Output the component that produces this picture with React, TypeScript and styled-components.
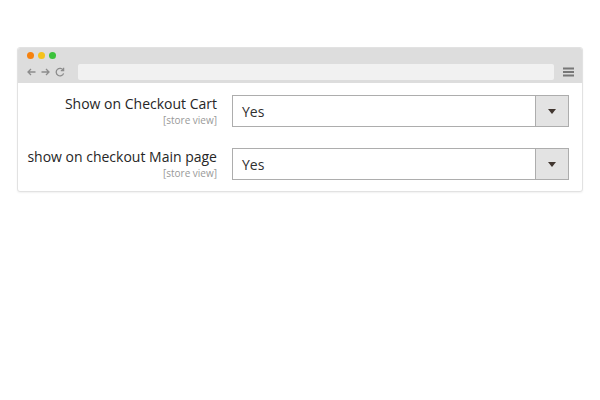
import React from 'react';
import styled, { createGlobalStyle } from 'styled-components';

const GlobalStyle = createGlobalStyle`
  html, body {
    margin: 0;
    padding: 0;
    background: #fff;
  }
  body {
    font-family: 'Open Sans', 'Noto Sans', sans-serif;
    color: #303030;
  }
`;

const Page = styled.div`
  width: 600px;
  height: 400px;
  box-sizing: border-box;
  padding: 47px 17px 0 17px;
`;

const Window = styled.div`
  width: 566px;
  border: 1px solid #e2e2e2;
  border-radius: 3px;
  box-shadow: 0 1px 2px rgba(0, 0, 0, 0.06);
  box-sizing: border-box;
  overflow: hidden;
  background: #fff;
`;

const TitleBar = styled.div`
  background: #dddddd;
  height: 35px;
  box-sizing: border-box;
  padding: 4px 8px 0 9px;
  display: flex;
  flex-direction: column;
`;

const Dots = styled.div`
  display: flex;
  gap: 4px;
  height: 8px;
`;

const Dot = styled.span<{ $color: string }>`
  width: 7px;
  height: 7px;
  border-radius: 50%;
  background: ${(p) => p.$color};
`;

const NavRow = styled.div`
  display: flex;
  align-items: center;
  margin-top: 3px;
  height: 17px;
`;

const NavIcons = styled.div`
  display: flex;
  align-items: center;
  gap: 5px;
  width: 51px;
  color: #8c8c8c;
`;

const Address = styled.div`
  flex: 1;
  height: 16px;
  background: #f1f1f1;
  border-radius: 2px;
`;

const Menu = styled.div`
  width: 20px;
  display: flex;
  justify-content: flex-end;
  color: #777;
`;

const Body = styled.div`
  padding: 12px 13px 11px 0;
  display: flex;
  flex-direction: column;
  gap: 21px;
`;

const Row = styled.div`
  display: grid;
  grid-template-columns: 199px 1fr;
  column-gap: 15px;
  align-items: start;
`;

const LabelCol = styled.div`
  text-align: right;
  padding-top: 1px;
`;

const Label = styled.div`
  font-size: 14px;
  line-height: 16px;
  color: #262626;
`;

const Scope = styled.div`
  margin-top: 2px;
  font-size: 10px;
  line-height: 12px;
  color: #999;
`;

const Select = styled.div`
  height: 32px;
  border: 1px solid #adadad;
  box-sizing: border-box;
  display: flex;
  background: #fff;
`;

const Value = styled.div`
  flex: 1;
  display: flex;
  align-items: center;
  padding-left: 9px;
  font-size: 14px;
  color: #303030;
`;

const Toggle = styled.div`
  width: 32px;
  border-left: 1px solid #adadad;
  background: #e3e3e3;
  display: flex;
  align-items: center;
  justify-content: center;
`;

const Arrow = () => (
  <svg width="8" height="5" viewBox="0 0 8 5">
    <path d="M0 0 L8 0 L4 5 Z" fill="#41362f" />
  </svg>
);

const rows = [
  { label: 'Show on Checkout Cart', value: 'Yes' },
  { label: 'show on checkout Main page', value: 'Yes' },
];

export default function App() {
  return (
    <>
      <GlobalStyle />
      <Page>
        <Window>
          <TitleBar>
            <Dots>
              <Dot $color="#f6820f" />
              <Dot $color="#f5c21c" />
              <Dot $color="#3cc23c" />
            </Dots>
            <NavRow>
              <NavIcons>
                <svg width="9" height="8" viewBox="0 0 9 8" fill="none" stroke="currentColor" strokeWidth="1.3">
                  <path d="M8.5 4 H1 M4 1 L1 4 L4 7" />
                </svg>
                <svg width="9" height="8" viewBox="0 0 9 8" fill="none" stroke="currentColor" strokeWidth="1.3">
                  <path d="M0.5 4 H8 M5 1 L8 4 L5 7" />
                </svg>
                <svg width="10" height="10" viewBox="0 0 10 10" fill="none" stroke="currentColor" strokeWidth="1.3">
                  <path d="M8.3 3.2 A3.8 3.8 0 1 0 8.6 6.4" />
                  <path d="M8.6 0.8 V3.6 H5.8" />
                </svg>
              </NavIcons>
              <Address />
              <Menu>
                <svg width="11" height="10" viewBox="0 0 11 10" fill="currentColor">
                  <rect x="0" y="0.5" width="11" height="2" />
                  <rect x="0" y="4" width="11" height="2" />
                  <rect x="0" y="7.5" width="11" height="2" />
                </svg>
              </Menu>
            </NavRow>
          </TitleBar>
          <Body>
            {rows.map((r) => (
              <Row key={r.label}>
                <LabelCol>
                  <Label>{r.label}</Label>
                  <Scope>[store view]</Scope>
                </LabelCol>
                <Select>
                  <Value>{r.value}</Value>
                  <Toggle>
                    <Arrow />
                  </Toggle>
                </Select>
              </Row>
            ))}
          </Body>
        </Window>
      </Page>
    </>
  );
}
